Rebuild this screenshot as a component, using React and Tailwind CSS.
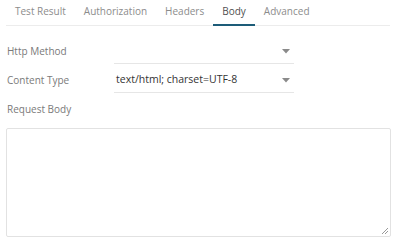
export default function App() {
  const tabs = ["Test Result", "Authorization", "Headers", "Body", "Advanced"];
  return (
    <div className="w-[396px] h-[241px] bg-white px-[6px] pt-0" style={{ fontFamily: '"Open Sans", sans-serif' }}>
      <div className="flex h-[26px] border-b border-[#ececec]">
        {tabs.map((t) => (
          <div
            key={t}
            className={`relative px-[9px] flex items-center text-[10px] pb-[3px] ${t === "Body" ? "text-[#505050]" : "text-[#8c8c8c]"}`}
          >
            {t}
            {t === "Body" && <div className="absolute left-0 right-0 bottom-[-1px] h-[2px] bg-[#1d5c78]" />}
          </div>
        ))}
      </div>
      <div className="pl-[1px] pt-[11px]">
        <div className="flex items-center h-[29px]">
          <div className="w-[107px] text-[10px] text-[#7a7a7a]">Http Method</div>
          <div className="w-[180px] h-[24px] border-b border-[#e6e6e6] flex items-center justify-between pl-[2px] pr-[4px]">
            <span className="text-[10.5px] text-[#333]"></span>
            <svg width="8" height="5" viewBox="0 0 8 5"><path d="M0 0H8L4 4.5Z" fill="#8a8a8a" /></svg>
          </div>
        </div>
        <div className="flex items-center h-[29px]">
          <div className="w-[107px] text-[10px] text-[#7a7a7a]">Content Type</div>
          <div className="w-[180px] h-[24px] border-b border-[#e6e6e6] flex items-center justify-between pl-[2px] pr-[4px]">
            <span className="text-[10.5px] text-[#333]">text/html; charset=UTF-8</span>
            <svg width="8" height="5" viewBox="0 0 8 5"><path d="M0 0H8L4 4.5Z" fill="#8a8a8a" /></svg>
          </div>
        </div>
        <div className="h-[29px] flex items-center text-[10px] text-[#7a7a7a]">Request Body</div>
      </div>
      <div className="mt-[4px] relative w-[385px] h-[109px] border border-[#e2e2e2] rounded-[2px]">
        <svg className="absolute right-[1px] bottom-[1px]" width="9" height="9" viewBox="0 0 9 9">
          <path d="M8 2L2 8M8 5L5 8" stroke="#999" strokeWidth="1" />
        </svg>
      </div>
    </div>
  );
}
